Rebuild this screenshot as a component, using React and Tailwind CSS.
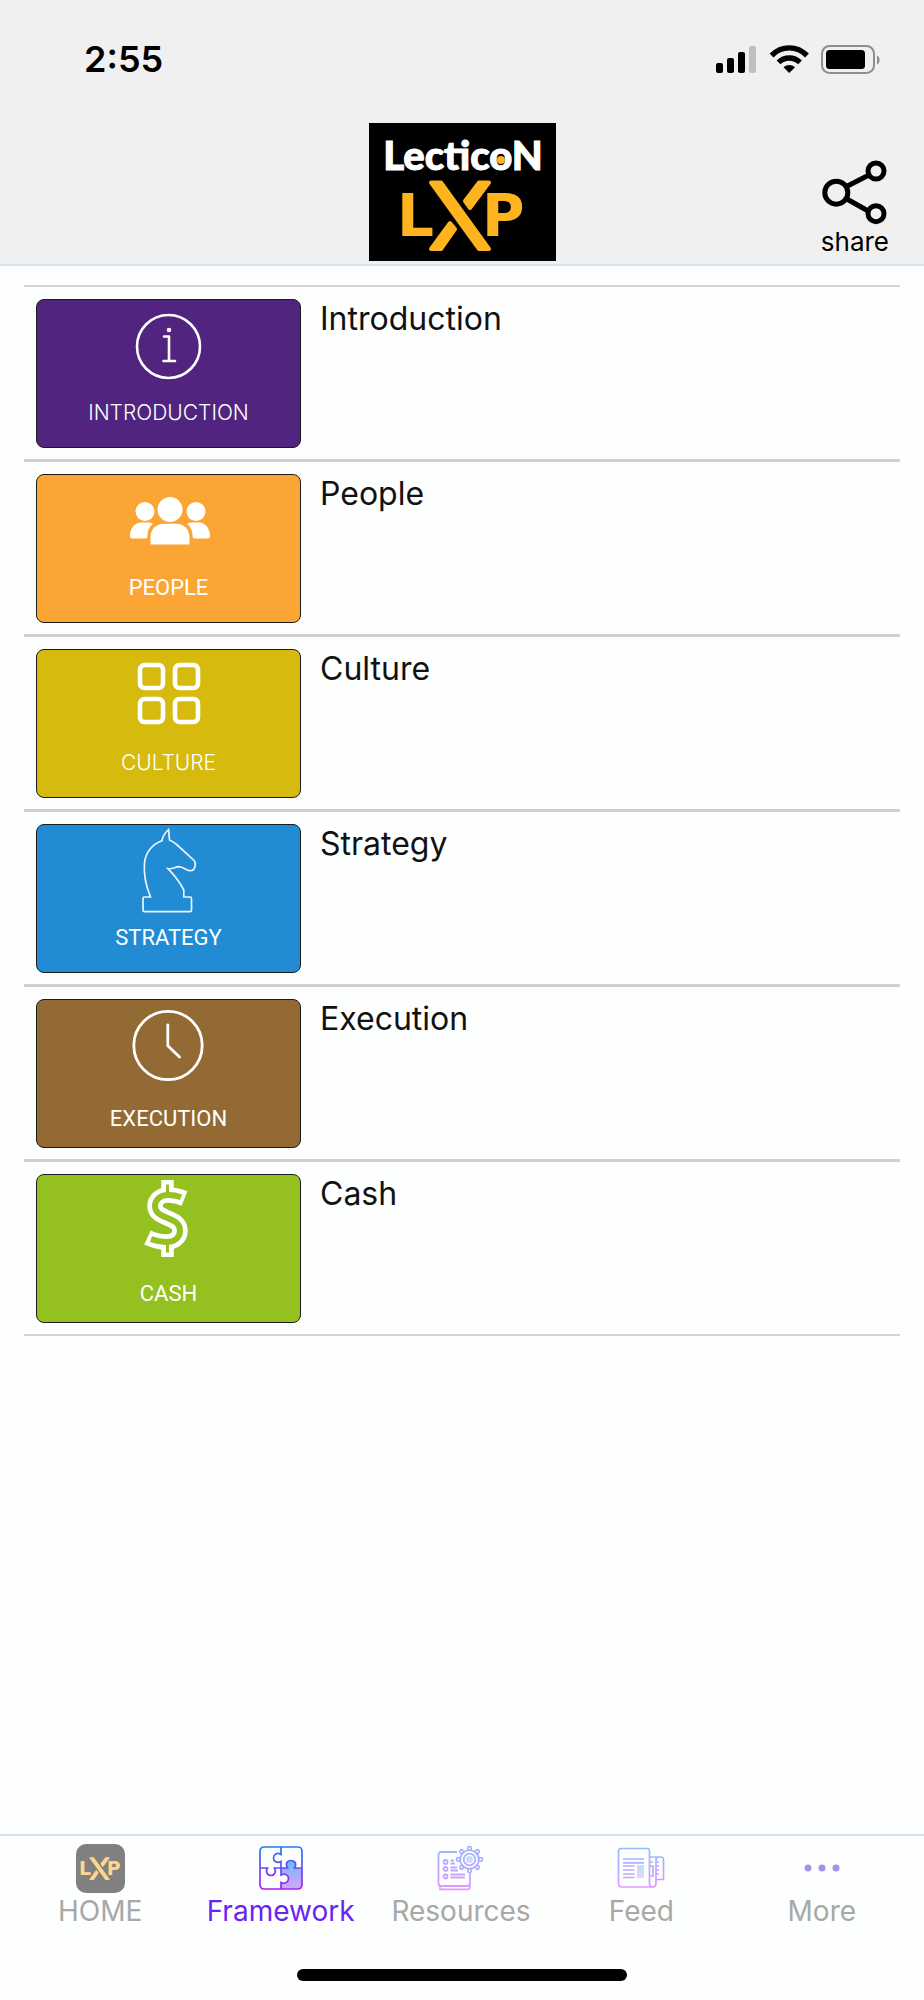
import React from "react";

function LxpMark({ color = "#fdb41e" }) {
  return (
    <g fill={color} stroke={color}>
      <text x="28" y="113" stroke="none" className="font-['DejaVu_Sans'] text-[58px] font-bold">L</text>
      <text x="113" y="113" stroke="none" className="font-['DejaVu_Sans'] text-[58px] font-bold">P</text>
      <g strokeWidth="4" strokeLinejoin="round">
        <path d="M62 59.5H72L120 126H110Z" />
        <path d="M110 59.5H120L101 85L96 78Z" />
        <path d="M62 126H72L86 106L81 100Z" />
      </g>
    </g>
  );
}

function Logo() {
  return (
    <svg viewBox="0 0 187 138" className="h-[138px] w-[187px] shrink-0 bg-black" role="img" aria-label="Lecticon LXP">
      <text x="94" y="47" textAnchor="middle" fill="#fff" stroke="#fff" strokeWidth="1" className="font-['Lato'] text-[40px] font-black">LecticoN</text>
      <circle cx="132" cy="37" r="4" fill="#fdb41e" />
      <LxpMark />
    </svg>
  );
}

function StatusIcons() {
  return (
    <svg viewBox="0 0 166 30" className="h-[30px] w-[166px]" aria-hidden="true">
      <rect x="0" y="19" width="7" height="10" rx="2" />
      <rect x="11" y="14" width="7" height="15" rx="2" />
      <rect x="22" y="8" width="7" height="21" rx="2" />
      <rect x="33" y="2" width="7" height="27" rx="2" fill="#bfbfbf" />
      <g fill="none" stroke="#000" strokeWidth="5.4">
        <path d="M55.5 11.5C65.5 1.3 81 1.3 91 11.5" />
        <path d="M62.5 18.4C68.500 12.500 78 12.500 84 18.4" />
      </g>
      <path d="M67.500 23.200C71 20.400 75.500 20.400 79 23.200L73.200 29Z" />
      <rect x="106" y="2" width="52" height="27" rx="7.500" fill="none" stroke="#8e8e8e" strokeWidth="2" />
      <rect x="110" y="6" width="39" height="19" rx="3.500" />
      <path d="M161 11.500C164.500 12.500 164.500 19.500 161 20.500Z" fill="#8e8e8e" />
    </svg>
  );
}

function ShareIcon() {
  return (
    <svg viewBox="0 0 66 67" className="h-[67px] w-[66px]" fill="none" stroke="#000" strokeWidth="5" aria-hidden="true">
      <circle cx="15.300" cy="33.700" r="11.500" />
      <circle cx="55" cy="12" r="8" />
      <circle cx="55" cy="54.700" r="8" />
      <path d="M25.500 27.500L48 16M25 39.500L48 52.500" />
    </svg>
  );
}

const icons = {
  introduction: (
    <g fill="none" stroke="#fff" strokeWidth="2.600" strokeLinecap="round" strokeLinejoin="round">
      <circle cx="49.500" cy="46.500" r="31.500" />
      <circle cx="50" cy="30" r="1" />
      <path d="M45 36.500H50V61M44.500 61H56" />
    </g>
  ),
  people: (
    <g fill="#fff">
      <circle cx="51" cy="34.500" r="12.500" />
      <path d="M31.500 69.500V63C31.500 54 37 48.700 45 48.700H57C65 48.700 70.500 54 70.500 63V69.500Z" />
      <circle cx="26" cy="36.500" r="9.500" />
      <path d="M13 63.500Q11 63.500 11 61C11 53 16 47.500 22 47.500H29Q32 47.500 34 48.700C30 52 28.500 56 28.500 61Q28.500 63.500 26.500 63.500Z" />
      <g transform="translate(102 0) scale(-1 1)">
        <circle cx="25" cy="36.500" r="9.500" />
        <path d="M13 63.500Q11 63.500 11 61C11 53 16 47.500 22 47.500H29Q32 47.500 34 48.700C30 52 28.500 56 28.500 61Q28.500 63.500 26.500 63.500Z" />
      </g>
    </g>
  ),
  culture: (
    <g fill="none" stroke="#fff" strokeWidth="4.600">
      <rect x="21" y="15" width="23" height="23" rx="4.500" />
      <rect x="56" y="15" width="23" height="23" rx="4.500" />
      <rect x="21" y="49" width="23" height="23" rx="4.500" />
      <rect x="56" y="49" width="23" height="23" rx="4.500" />
    </g>
  ),
  strategy: (
    <path
      d="M31.500 72C27 61 24.500 49 25.500 38C26.500 28 33 19 43 15.700C43.500 10.500 46.500 7.500 49.600 4.500L50.500 15C54 16.500 56 18 58.200 20L75.300 35.700Q76.500 37.500 76.200 40.500C75.500 45 73.500 46 70.800 45.700C67 45 64.500 42 59.800 41.700C56 41.700 54 44.300 49 43.700C56 51 61 57.500 64.800 65V72H71Q72.500 72 72.500 73.500V85Q72.500 86.700 71 86.700H25.500Q24 86.700 24 85V73.500Q24 72 25.500 72Z"
      fill="none"
      stroke="#eaf5fd"
      strokeWidth="1.700"
    />
  ),
  execution: (
    <g fill="none" stroke="#fff" strokeWidth="2.800" strokeLinecap="round" strokeLinejoin="round">
      <circle cx="49" cy="45.500" r="34.200" />
      <path d="M48.800 25V45.700L60.500 57" />
    </g>
  ),
  cash: (
    <g fill="none">
      <path d="M48.500 5V20M48.500 67V82" stroke="#fff" strokeWidth="12.500" />
      <path d="M65.500 23.500C58 20.500 53 20 49 20C41 20 36 25 36 31C36 45 61 41 61 55.500C61 63 55 67 47 67C40 67 35 65.500 28.500 62.500" stroke="#fff" strokeWidth="15.500" />
      <path d="M62 22.200C57 20.300 53 20 49 20C41 20 36 25 36 31C36 45 61 41 61 55.500C61 63 55 67 47 67C41 67 36.500 65.800 32 64.200" stroke="#94c11f" strokeWidth="6" />
      <path d="M48.500 9.500V19M48.500 68V77.500" stroke="#94c11f" strokeWidth="3" />
    </g>
  ),
};

const sections = [
  { id: "introduction", title: "Introduction", color: "bg-[#51257f]", label: "font-['Inter'] text-[21px] font-light pb-[26px]" },
  { id: "people", title: "People", color: "bg-[#faa534]", label: "font-['Roboto'] text-[22px] pb-[26px]" },
  { id: "culture", title: "Culture", color: "bg-[#d7ba0e]", label: "font-['Inter'] text-[21px] font-light pb-[26px]" },
  { id: "strategy", title: "Strategy", color: "bg-[#218bd4]", label: "font-['Roboto'] text-[22px] pb-[26px]" },
  { id: "execution", title: "Execution", color: "bg-[#936a34]", label: "font-['Roboto'] text-[22px] pb-5" },
  { id: "cash", title: "Cash", color: "bg-[#94c11f]", label: "font-['Roboto'] text-[22px] pb-5" },
];

function SectionRow({ section }) {
  return (
    <li>
      <a href={"#" + section.id} className="flex items-start gap-[19px] px-3 pt-3 pb-[11px]">
        <span className={"flex h-[149px] w-[265px] shrink-0 flex-col items-center justify-between rounded-lg border border-[#1c1c1c] text-white " + section.color}>
          <svg viewBox="0 0 100 92" className="h-[92px] w-[100px]" aria-hidden="true">{icons[section.id]}</svg>
          <span className={"leading-4 uppercase " + section.label}>{section.title}</span>
        </span>
        <span className="text-[32px] leading-10 text-[#111]">{section.title}</span>
      </a>
    </li>
  );
}

function Gradient({ id, soft }) {
  return (
    <defs>
      <linearGradient id={id} gradientUnits="userSpaceOnUse" x1="0" y1="0" x2="0" y2="44">
        <stop offset="0" stopColor={soft ? "#93bdff" : "#1e7bff"} />
        <stop offset="1" stopColor={soft ? "#e596ff" : "#b818f0"} />
      </linearGradient>
      <linearGradient id={id + "-fill"} x1="0" y1="0" x2="0" y2="1">
        <stop offset="0" stopColor={soft ? "#b5e3ff" : "#68bdff"} />
        <stop offset="1" stopColor={soft ? "#edd0ff" : "#d5a5f8"} />
      </linearGradient>
    </defs>
  );
}

function HomeIcon() {
  return (
    <svg viewBox="0 0 49 49" className="h-[49px] w-[49px]" aria-hidden="true">
      <rect width="49" height="49" rx="10" fill="#808080" />
      <g transform="translate(-6 -5.500) scale(0.325)">
        <LxpMark color="#fdd68c" />
      </g>
    </svg>
  );
}

function FrameworkIcon() {
  return (
    <svg viewBox="0 0 44 44" className="h-11 w-11" fill="none" aria-hidden="true">
      <Gradient id="framework" />
      <path
        d="M22 22H28.500C26 18 28 14.500 32 14.500S38 18 35.500 22H43V39Q43 43 39 43H22V36.500C26 38.500 29.500 36 29.500 32.500S26 27 22 29Z"
        fill="url(#framework-fill)"
      />
      <g stroke="url(#framework)" strokeWidth="1.700">
        <rect x="1" y="1" width="42" height="42" rx="4" />
        <path d="M22 1V8.500C18 6 14.500 8.500 14.500 12S18 17.500 22 15.500V22" />
        <path d="M1 22H8.500C6 26 8.500 29.500 12 29.500S17.500 26 15.500 22H28.500C26 18 28 14.500 32 14.500S38 18 35.500 22H43" />
        <path d="M22 22V29C26 27 29.500 29 29.500 32.500S26 38.500 22 36.500V43" />
      </g>
    </svg>
  );
}

function ResourcesIcon() {
  const teeth = [0, 45, 90, 135, 180, 225, 270, 315];
  return (
    <svg viewBox="0 0 48 46" className="h-[46px] w-12" fill="none" aria-hidden="true">
      <Gradient id="resources" soft />
      <g stroke="url(#resources)" strokeWidth="1.800">
        <path d="M20 7H4Q1.500 7 1.500 10V38Q1.500 41 4 41H30Q33 41 33 38V28" />
        <path d="M3 41V44.300H31Q33 44.300 33 40" />
        <circle cx="8.500" cy="17" r="2" />
        <circle cx="8.500" cy="24" r="2" />
        <circle cx="8.500" cy="31.500" r="2" />
        <path d="M13.500 15.500H17M13.500 18.500H18M13.500 22.500H20M13.500 25.500H21M13.500 29.500H28M13.500 32.500H28" />
        <circle cx="32.500" cy="14.500" r="5.800" />
        <circle cx="32.500" cy="14.500" r="9.300" />
      </g>
      {teeth.map((angle) => (
        <rect key={angle} x="30.800" y="1.500" width="3.400" height="3.700" rx="1.400" fill="#fdfefe" stroke="#a3a9ff" strokeWidth="1.500" transform={"rotate(" + angle + " 32.500 14.500)"} />
      ))}
      <circle cx="32.500" cy="14.500" r="3.600" fill="url(#resources-fill)" />
    </svg>
  );
}

function FeedIcon() {
  return (
    <svg viewBox="0 0 48 42" className="h-[42px] w-12" fill="none" aria-hidden="true">
      <Gradient id="feed" soft />
      <g stroke="url(#feed)" strokeWidth="1.700" strokeLinejoin="round">
        <path d="M5 1.500H30Q32.500 1.500 32.500 4V36Q32.500 40 35.500 40H5Q1.500 40 1.500 36V4Q1.500 1.500 5 1.500Z" />
        <path d="M35.500 40Q39 40 39 36V13Q39 10 42 10H44Q46.500 10 46.500 13V32.500H39M42 10H32.500M32.500 19H36V29H32.500M32.500 15H36M42 15H39M42 19H39M42 23H39M42 27H39" />
        <path d="M6 12H27M6 15.800H27M6 19H17.500M6 23H17.500M6 27H17.500M6 30.500H17.500" />
      </g>
      <rect x="20" y="18" width="7" height="13" fill="url(#feed-fill)" />
    </svg>
  );
}

function MoreIcon() {
  return (
    <svg viewBox="0 0 36 8" className="h-2 w-9" fill="#a294ed" aria-hidden="true">
      <circle cx="4" cy="4" r="3.500" />
      <circle cx="18" cy="4" r="3.500" />
      <circle cx="32" cy="4" r="3.500" />
    </svg>
  );
}

const tabs = [
  { name: "HOME", Icon: HomeIcon },
  { name: "Framework", Icon: FrameworkIcon, active: true },
  { name: "Resources", Icon: ResourcesIcon },
  { name: "Feed", Icon: FeedIcon },
  { name: "More", Icon: MoreIcon },
];

export default function App() {
  return (
    <div className="flex min-h-screen flex-col bg-[#fdfefe] font-['Inter',sans-serif] text-black">
      <header className="border-b-2 border-[#d9e2f1] bg-[#f0f0f0]">
        <div className="flex items-center justify-between pt-[39px] pr-[42px] pl-[84px]">
          <time className="text-[36px] leading-10 font-semibold">2:55</time>
          <StatusIcons />
        </div>
        <div className="grid grid-cols-[1fr_auto_1fr] items-end pt-11 pb-[3px]">
          <span />
          <Logo />
          <button type="button" className="mr-[35px] flex flex-col items-start justify-self-end pb-[3px] text-[26px] leading-8">
            <ShareIcon />
            <span>share</span>
          </button>
        </div>
      </header>

      <main className="px-6 pt-[19px]">
        <ul className="divide-y-3 divide-[#d0d0d0] border-y-2 border-[#d4d4d4]">
          {sections.map((section) => (
            <SectionRow key={section.id} section={section} />
          ))}
        </ul>
      </main>

      <footer className="mt-auto border-t-2 border-[#d9e2f1]">
        <nav className="grid grid-cols-5 pt-[7px] pr-3 pl-[10px]">
          {tabs.map(({ name, Icon, active }) => (
            <a key={name} href={"#" + name.toLowerCase()} className={"flex flex-col items-center text-[28px] leading-9 " + (active ? "text-[#6c22f5]" : "text-[#a8a8a8]")}>
              <span className="flex h-[50px] items-center">
                <Icon />
              </span>
              {name}
            </a>
          ))}
        </nav>
        <div className="mx-auto mt-10 mb-[19px] h-3 w-[330px] rounded-full bg-black" />
      </footer>
    </div>
  );
}
